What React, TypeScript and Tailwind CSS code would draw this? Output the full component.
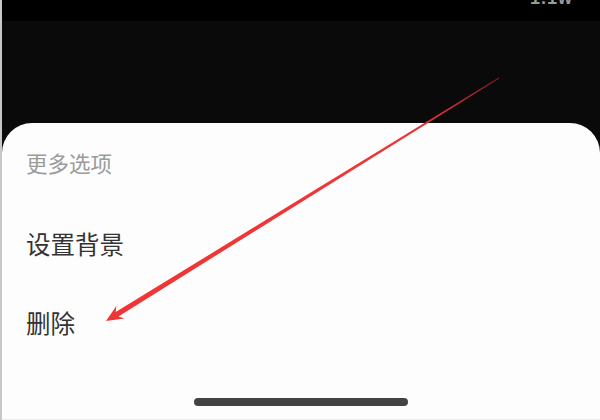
import React from "react";

export default function App() {
  // arrow geometry
  const S = [497, 78];
  const T = [104, 321];
  const dx = T[0] - S[0];
  const dy = T[1] - S[1];
  const len = Math.hypot(dx, dy);
  const ux = dx / len;
  const uy = dy / len;
  const px = -uy;
  const py = ux;
  const headLen = 17;
  const headHalf = 7.5;
  const B = [T[0] - ux * headLen, T[1] - uy * headLen];
  const N = [T[0] - ux * (headLen - 4), T[1] - uy * (headLen - 4)];
  const w0 = 0.6;
  const w1 = 2.6;
  const pts = [
    [S[0] + px * w0, S[1] + py * w0],
    [N[0] + px * w1, N[1] + py * w1],
    [B[0] + px * headHalf, B[1] + py * headHalf],
    [T[0], T[1]],
    [B[0] - px * headHalf, B[1] - py * headHalf],
    [N[0] - px * w1, N[1] - py * w1],
    [S[0] - px * w0, S[1] - py * w0],
  ]
    .map((p) => `${p[0].toFixed(1)},${p[1].toFixed(1)}`)
    .join(" ");

  return (
    <div
      className="relative w-[600px] h-[420px] overflow-hidden bg-[#0a0a0a] flex flex-col border-l-2 border-[#c8c8c8]"
      style={{ fontFamily: '"Noto Sans CJK SC", "Noto Sans", sans-serif' }}
    >
      <div className="h-[123px] flex flex-col shrink-0">
        <div className="h-[21px] bg-black flex justify-end pr-[27px] overflow-hidden">
          <span className="text-[18px] leading-[18px] -mt-[11px] text-[#9a9a9a] font-bold tracking-[1px]" style={{ fontFamily: '"Liberation Sans", sans-serif' }}>
            1.1w
          </span>
        </div>
        <div className="flex-1 bg-[#0a0a0a]" />
      </div>
      <div className="flex-1 bg-[#fdfdfd] rounded-t-[30px] flex flex-col pl-[24px] border-b border-[#ececec]">
        <div className="pt-[25px] text-[21.5px] leading-[30px] text-[#9b9b9b]">更多选项</div>
        <div className="mt-[50px] text-[24.5px] leading-[32px] text-[#333333]">设置背景</div>
        <div className="mt-[47px] text-[24.5px] leading-[32px] text-[#333333]">删除</div>
        <div className="mt-auto mb-[13px] -ml-[24px] flex justify-center">
          <div className="w-[214px] h-[8px] rounded-full bg-[#434343]" />
        </div>
      </div>
      <svg
        className="absolute left-0 top-0 pointer-events-none"
        width={600}
        height={420}
        viewBox="0 0 600 420"
      >
        <defs>
          <linearGradient id="arrowGrad" gradientUnits="userSpaceOnUse" x1="497" y1="78" x2="104" y2="321">
            <stop offset="0" stopColor="#7a1c24" />
            <stop offset="0.12" stopColor="#c42a38" />
            <stop offset="0.25" stopColor="#ef3535" />
            <stop offset="1" stopColor="#ef3535" />
          </linearGradient>
        </defs>
        <polygon points={pts} fill="url(#arrowGrad)" />
      </svg>
    </div>
  );
}
